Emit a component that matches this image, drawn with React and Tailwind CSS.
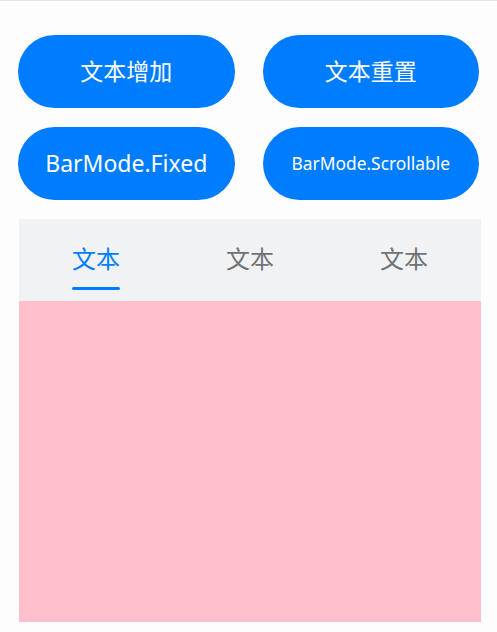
import React from "react";

const font = { fontFamily: '"Noto Sans", "Noto Sans CJK SC", sans-serif' };

function Pill({ children, small }) {
  return (
    <button className={`h-[73px] rounded-full bg-[#007dff] text-white flex items-center justify-center ${small ? "text-[17.4px]" : "text-[23px]"}`}>
      {children}
    </button>
  );
}

export default function App() {
  const tabs = ["文本", "文本", "文本"];
  return (
    <div style={font} className="w-[497px] h-[632px] bg-[#fdfdfd] border-t border-[#e3e3e3] overflow-hidden">
      <div className="px-[18px] pt-[34px] grid grid-cols-2 gap-x-[28px] gap-y-[19px]">
        <Pill>文本增加</Pill>
        <Pill>文本重置</Pill>
        <Pill>BarMode.Fixed</Pill>
        <Pill small>BarMode.Scrollable</Pill>
      </div>
      <div className="ml-[19px] mr-[16px] mt-[19px]">
        <div className="h-[82px] bg-[#f1f2f4] grid grid-cols-3">
          {tabs.map((t, i) => (
            <div key={i} className="relative flex items-center justify-center">
              <span className={`text-[24px] ${i === 0 ? "text-[#007dff]" : "text-[#6f7377]"} -mt-[3px]`}>{t}</span>
              {i === 0 && <div className="absolute bottom-[11px] w-[48px] h-[3px] bg-[#007dff] rounded-full" />}
            </div>
          ))}
        </div>
        <div className="h-[321px] bg-[#ffc0cb]" />
      </div>
    </div>
  );
}
